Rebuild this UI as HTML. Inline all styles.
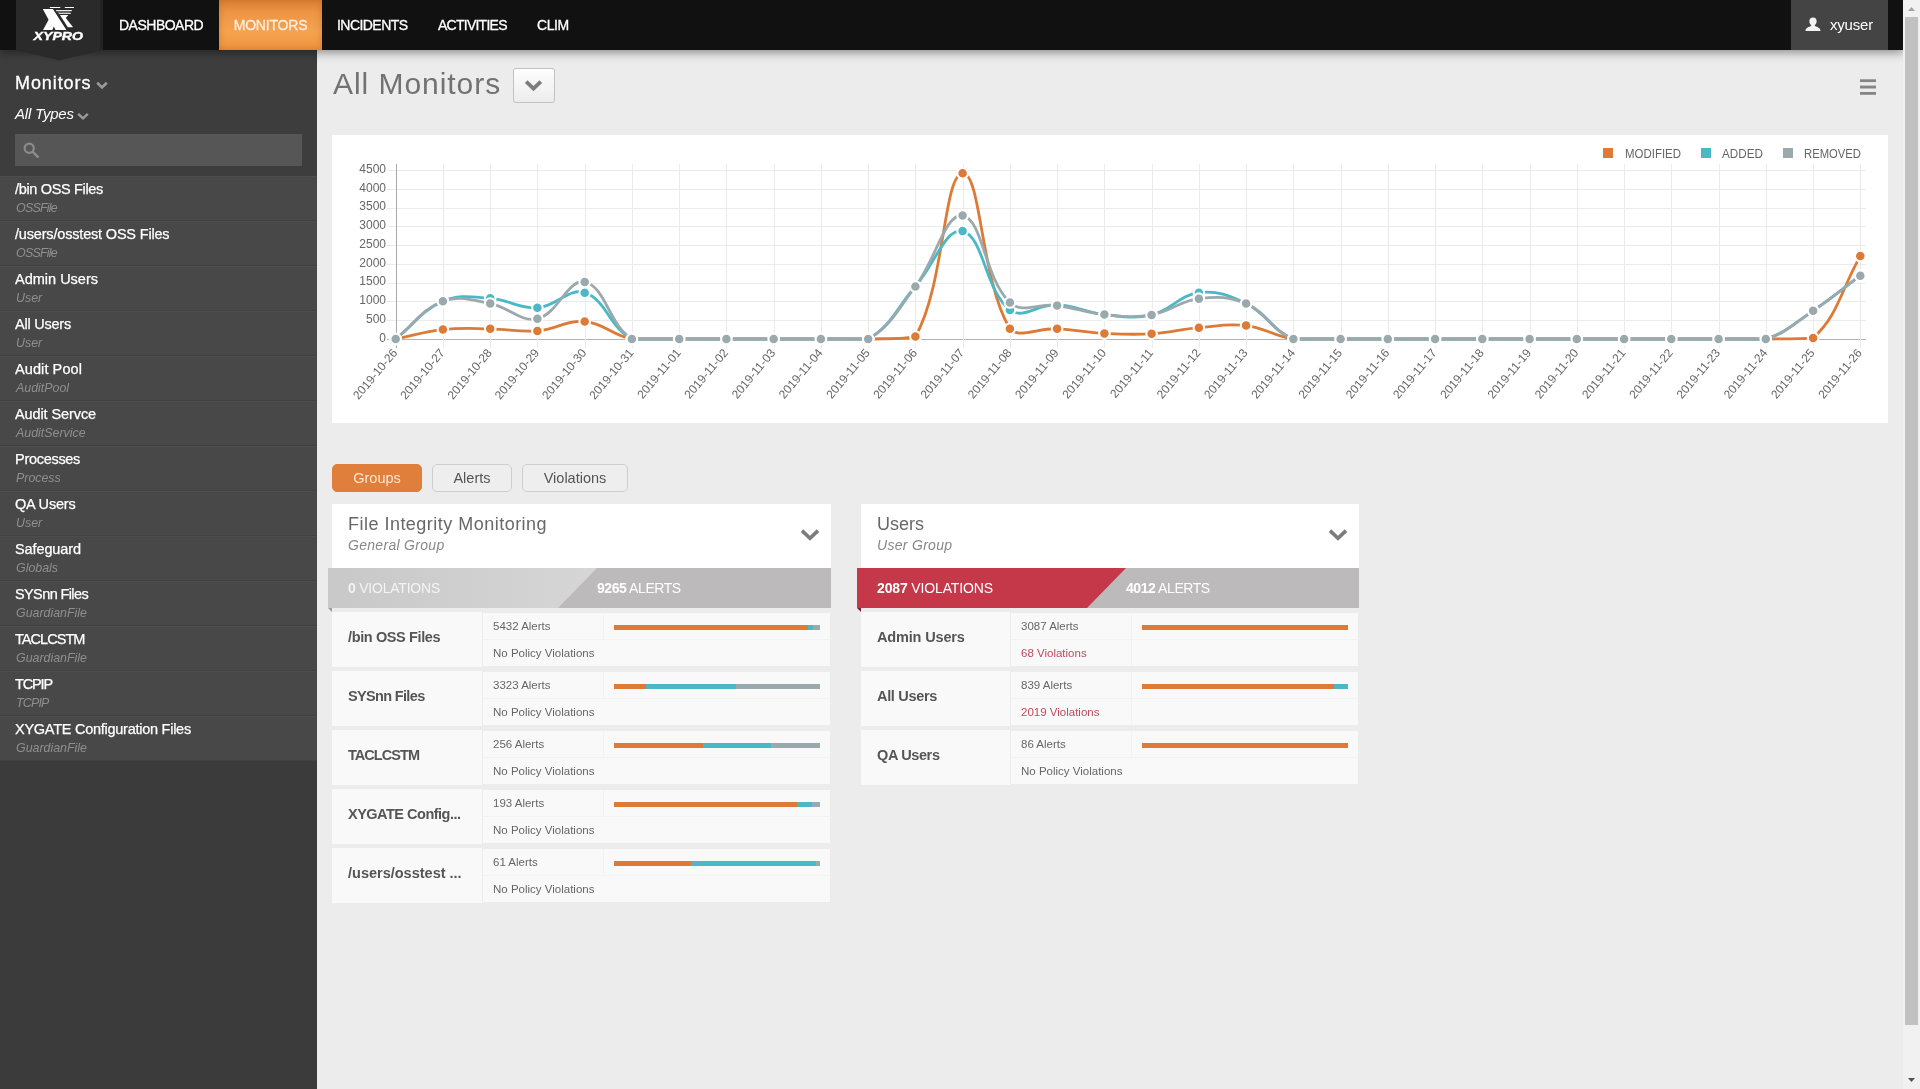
<!DOCTYPE html>
<html><head><meta charset="utf-8"><title>All Monitors</title>
<style>
*{box-sizing:border-box;margin:0;padding:0}
html,body{width:1920px;height:1089px;overflow:hidden}
body{font-family:"Liberation Sans",sans-serif;background:#ececec;position:relative;color:#555}
.abs{position:absolute}
#nav{position:absolute;left:0;top:0;width:1903px;height:50px;background:#111;box-shadow:0 1px 10px 1px rgba(0,0,0,.45);z-index:5}
#nav .it{-webkit-text-stroke:.3px #fff;position:absolute;top:0;height:50px;line-height:50px;color:#fff;font-size:14px;white-space:nowrap;letter-spacing:-0.2px}
#nav .act{-webkit-text-stroke:.3px #fdf0e2;background:linear-gradient(#db8237 0%,#ee9646 28%,#f6a350 62%,#ef9440 100%);box-shadow:inset 0 0 7px rgba(190,95,25,.55);text-align:center;color:#fdf0e2}
#logo{position:absolute;left:16px;top:0;width:87px;height:61px;z-index:6}
#user{position:absolute;left:1791px;top:0;width:97px;height:50px;background:#444}
#side{position:absolute;left:0;top:50px;width:317px;height:1039px;background:#3b3b3b}
#sidehead{position:absolute;left:0;top:0;width:317px;height:126px;background:#3e3d3d}
#side .li{position:absolute;left:0;width:317px;height:45px;background:#484848;border-bottom:1px solid #414141;border-top:1px solid #4d4d4d}
#side .li b{-webkit-text-stroke:.25px #fff;position:absolute;left:15px;top:3px;font-weight:normal;color:#fff;font-size:14.5px;line-height:18px;white-space:nowrap;letter-spacing:-0.15px}
#side .li i{position:absolute;left:16px;top:24px;color:#8f8f8f;font-size:12.4px;line-height:14px;white-space:nowrap}
#main{position:absolute;left:317px;top:50px;width:1586px;height:1039px;background:#ececec}
#sb{position:absolute;left:1903px;top:0;width:17px;height:1089px;background:#f1f1f1;z-index:9}
#sb .th{position:absolute;left:2px;top:17px;width:13px;height:1008px;background:#c1c1c1}
#all{position:absolute;left:0;top:0;width:1920px;height:1089px}
#nav,#side,#logo,.title,.tab,.card,#chart,.hd,.bn,.row,.c,.nm{filter:opacity(1)}
</style></head><body><div id="all">
<div id="nav">
 <div class="it" style="left:119px;letter-spacing:-0.5px">DASHBOARD</div>
 <div class="it act" style="left:219px;width:103px">MONITORS</div>
 <div class="it" style="left:337px;letter-spacing:-0.55px">INCIDENTS</div>
 <div class="it" style="left:438px;letter-spacing:-0.75px">ACTIVITIES</div>
 <div class="it" style="left:537px;letter-spacing:-0.4px">CLIM</div>
 <div id="user">
  <svg class="abs" style="left:14px;top:16.5px" width="16" height="14.5" viewBox="0 0 14 14" preserveAspectRatio="none"><path d="M7 0.5C4.9 0.5 3.8 2.1 3.8 4.2c0 1.4.6 2.9 1.6 3.7v.9C3.6 9.6.6 10.4.4 13.5h13.2c-.2-3.1-3.2-3.9-5-4.7v-.9c1-.8 1.6-2.3 1.6-3.7C10.2 2.1 9.1.5 7 .5z" fill="#f2f2f2"/></svg>
  <span class="abs" style="left:39px;top:0;line-height:50px;color:#fff;font-size:15px;letter-spacing:-0.2px">xyuser</span>
 </div>
</div>
<svg id="logo" viewBox="0 0 87 61">
 <polygon points="0,0 87,0 87,50 43.5,60.5 0,50" fill="#2a2a2a"/>
 <rect x="84" y="0" width="3" height="50" fill="#232323"/>
 <g fill="#fff">
  <polygon points="26.8,9.1 36.9,9.1 50.4,29.9 39.5,29.9 37.9,26.6 36.3,29.9 27,29.9 32.6,19.8"/>
  <polygon points="43.9,14.9 52.2,14.9 49.8,18 57.1,27.2 51.8,27.2"/>
  <rect x="33.8" y="7" width="10.5" height="1"/><rect x="48.8" y="7" width="9.2" height="1"/>
  <rect x="40.1" y="10.1" width="15.7" height="1.1"/>
  <rect x="41.9" y="11.8" width="12.5" height="0.7" fill="#aaa"/>
  <rect x="42.7" y="13.1" width="12.1" height="0.9" fill="#e8e8e8"/>
 </g>
 <text x="17.5" y="39.8" fill="#fff" font-family="Liberation Sans" font-weight="bold" font-style="italic" font-size="10.5" stroke="#fff" stroke-width="0.35" textLength="49.6" lengthAdjust="spacingAndGlyphs">XYPRO</text>
</svg>
<div id="side">
 <div id="sidehead">
  <div class="abs" style="left:15px;top:20.5px;color:#fff;-webkit-text-stroke:.3px #fff;font-size:18px;line-height:24px;letter-spacing:0.92px">Monitors</div>
  <svg class="abs" style="left:96px;top:31px" width="12" height="9" viewBox="0 0 12 9"><path d="M1.2 1.8L6 6.4l4.8-4.6" fill="none" stroke="#9a9a9a" stroke-width="2.6"/></svg>
  <div class="abs" style="left:15px;top:54px;color:#fff;font-size:15px;line-height:20px;font-style:italic;letter-spacing:-0.2px">All Types</div>
  <svg class="abs" style="left:77px;top:62px" width="12" height="9" viewBox="0 0 12 9"><path d="M1.2 1.8L6 6.4l4.8-4.6" fill="none" stroke="#9a9a9a" stroke-width="2.4"/></svg>
  <div class="abs" style="left:15px;top:84px;width:287px;height:32px;background:#575656"></div>
  <svg class="abs" style="left:22px;top:91px" width="18" height="18" viewBox="0 0 18 18"><circle cx="7.2" cy="7.2" r="4.6" fill="none" stroke="#8b8b8b" stroke-width="2.2"/><path d="M10.8 10.8l5 5" stroke="#8b8b8b" stroke-width="2.6" stroke-linecap="round"/></svg>
 </div>
 <div class="li" style="top:126px"><b style="letter-spacing:-0.34px">/bin OSS Files</b><i style="letter-spacing:-0.75px">OSSFile</i></div>
 <div class="li" style="top:171px"><b style="letter-spacing:-0.18px">/users/osstest OSS Files</b><i style="letter-spacing:-0.75px">OSSFile</i></div>
 <div class="li" style="top:216px"><b style="letter-spacing:0.00px">Admin Users</b><i>User</i></div>
 <div class="li" style="top:261px"><b style="letter-spacing:-0.23px">All Users</b><i>User</i></div>
 <div class="li" style="top:306px"><b style="letter-spacing:0.09px">Audit Pool</b><i>AuditPool</i></div>
 <div class="li" style="top:351px"><b style="letter-spacing:-0.10px">Audit Servce</b><i>AuditService</i></div>
 <div class="li" style="top:396px"><b style="letter-spacing:-0.29px">Processes</b><i>Process</i></div>
 <div class="li" style="top:441px"><b style="letter-spacing:-0.19px">QA Users</b><i>User</i></div>
 <div class="li" style="top:486px"><b style="letter-spacing:-0.11px">Safeguard</b><i>Globals</i></div>
 <div class="li" style="top:531px"><b style="letter-spacing:-0.61px">SYSnn Files</b><i>GuardianFile</i></div>
 <div class="li" style="top:576px"><b style="letter-spacing:-0.95px">TACLCSTM</b><i>GuardianFile</i></div>
 <div class="li" style="top:621px"><b style="letter-spacing:-1.15px">TCPIP</b><i style="letter-spacing:-0.8px">TCPIP</i></div>
 <div class="li" style="top:666px"><b style="letter-spacing:-0.26px">XYGATE Configuration Files</b><i>GuardianFile</i></div>
</div>
<svg id="chart" class="abs" style="left:332px;top:135px" width="1556" height="288" viewBox="332 135 1556 288" font-family="Liberation Sans" font-size="12">
<rect x="332" y="135" width="1556" height="288" fill="#fff"/>
<g fill="none" stroke-width="1" shape-rendering="crispEdges"><path d="M387 339.5H1866" stroke="#b4b4b4"/><path d="M387 320.5H1866" stroke="#ebebeb"/><path d="M387 301.5H1866" stroke="#ebebeb"/><path d="M387 283.5H1866" stroke="#ebebeb"/><path d="M387 264.5H1866" stroke="#ebebeb"/><path d="M387 245.5H1866" stroke="#ebebeb"/><path d="M387 226.5H1866" stroke="#ebebeb"/><path d="M387 208.5H1866" stroke="#ebebeb"/><path d="M387 189.5H1866" stroke="#ebebeb"/><path d="M387 170.5H1866" stroke="#ebebeb"/><path d="M396.5 164V348" stroke="#a9a9a9"/><path d="M443.5 164V348" stroke="#ebebeb"/><path d="M490.5 164V348" stroke="#ebebeb"/><path d="M537.5 164V348" stroke="#ebebeb"/><path d="M585.5 164V348" stroke="#ebebeb"/><path d="M632.5 164V348" stroke="#ebebeb"/><path d="M679.5 164V348" stroke="#ebebeb"/><path d="M726.5 164V348" stroke="#ebebeb"/><path d="M774.5 164V348" stroke="#ebebeb"/><path d="M821.5 164V348" stroke="#ebebeb"/><path d="M868.5 164V348" stroke="#ebebeb"/><path d="M915.5 164V348" stroke="#ebebeb"/><path d="M963.5 164V348" stroke="#ebebeb"/><path d="M1010.5 164V348" stroke="#ebebeb"/><path d="M1057.5 164V348" stroke="#ebebeb"/><path d="M1104.5 164V348" stroke="#ebebeb"/><path d="M1152.5 164V348" stroke="#ebebeb"/><path d="M1199.5 164V348" stroke="#ebebeb"/><path d="M1246.5 164V348" stroke="#ebebeb"/><path d="M1293.5 164V348" stroke="#ebebeb"/><path d="M1341.5 164V348" stroke="#ebebeb"/><path d="M1388.5 164V348" stroke="#ebebeb"/><path d="M1435.5 164V348" stroke="#ebebeb"/><path d="M1482.5 164V348" stroke="#ebebeb"/><path d="M1530.5 164V348" stroke="#ebebeb"/><path d="M1577.5 164V348" stroke="#ebebeb"/><path d="M1624.5 164V348" stroke="#ebebeb"/><path d="M1671.5 164V348" stroke="#ebebeb"/><path d="M1719.5 164V348" stroke="#ebebeb"/><path d="M1766.5 164V348" stroke="#ebebeb"/><path d="M1813.5 164V348" stroke="#ebebeb"/><path d="M1860.5 164V348" stroke="#ebebeb"/></g>
<g fill="#666" text-anchor="end"><text x="386" y="341.5">0</text><text x="386" y="322.7">500</text><text x="386" y="304.0">1000</text><text x="386" y="285.2">1500</text><text x="386" y="266.5">2000</text><text x="386" y="247.7">2500</text><text x="386" y="229.0">3000</text><text x="386" y="210.2">3500</text><text x="386" y="191.5">4000</text><text x="386" y="172.7">4500</text></g>
<g fill="#666" text-anchor="end"><text transform="translate(394.8 350.4) rotate(-50)" y="4.2">2019-10-26</text><text transform="translate(442.0 350.4) rotate(-50)" y="4.2">2019-10-27</text><text transform="translate(489.3 350.4) rotate(-50)" y="4.2">2019-10-28</text><text transform="translate(536.5 350.4) rotate(-50)" y="4.2">2019-10-29</text><text transform="translate(583.8 350.4) rotate(-50)" y="4.2">2019-10-30</text><text transform="translate(631.0 350.4) rotate(-50)" y="4.2">2019-10-31</text><text transform="translate(678.3 350.4) rotate(-50)" y="4.2">2019-11-01</text><text transform="translate(725.5 350.4) rotate(-50)" y="4.2">2019-11-02</text><text transform="translate(772.8 350.4) rotate(-50)" y="4.2">2019-11-03</text><text transform="translate(820.0 350.4) rotate(-50)" y="4.2">2019-11-04</text><text transform="translate(867.3 350.4) rotate(-50)" y="4.2">2019-11-05</text><text transform="translate(914.5 350.4) rotate(-50)" y="4.2">2019-11-06</text><text transform="translate(961.7 350.4) rotate(-50)" y="4.2">2019-11-07</text><text transform="translate(1009.0 350.4) rotate(-50)" y="4.2">2019-11-08</text><text transform="translate(1056.2 350.4) rotate(-50)" y="4.2">2019-11-09</text><text transform="translate(1103.5 350.4) rotate(-50)" y="4.2">2019-11-10</text><text transform="translate(1150.7 350.4) rotate(-50)" y="4.2">2019-11-11</text><text transform="translate(1198.0 350.4) rotate(-50)" y="4.2">2019-11-12</text><text transform="translate(1245.2 350.4) rotate(-50)" y="4.2">2019-11-13</text><text transform="translate(1292.5 350.4) rotate(-50)" y="4.2">2019-11-14</text><text transform="translate(1339.7 350.4) rotate(-50)" y="4.2">2019-11-15</text><text transform="translate(1386.9 350.4) rotate(-50)" y="4.2">2019-11-16</text><text transform="translate(1434.2 350.4) rotate(-50)" y="4.2">2019-11-17</text><text transform="translate(1481.4 350.4) rotate(-50)" y="4.2">2019-11-18</text><text transform="translate(1528.7 350.4) rotate(-50)" y="4.2">2019-11-19</text><text transform="translate(1575.9 350.4) rotate(-50)" y="4.2">2019-11-20</text><text transform="translate(1623.2 350.4) rotate(-50)" y="4.2">2019-11-21</text><text transform="translate(1670.4 350.4) rotate(-50)" y="4.2">2019-11-22</text><text transform="translate(1717.7 350.4) rotate(-50)" y="4.2">2019-11-23</text><text transform="translate(1764.9 350.4) rotate(-50)" y="4.2">2019-11-24</text><text transform="translate(1812.2 350.4) rotate(-50)" y="4.2">2019-11-25</text><text transform="translate(1859.4 350.4) rotate(-50)" y="4.2">2019-11-26</text></g>
<path d="M395.7 339.0C414.6 335.2 423.9 331.6 442.9 329.6C461.7 327.6 471.3 328.6 490.2 328.8C509.1 329.1 518.7 332.4 537.4 330.9C556.5 329.4 566.2 319.9 584.7 321.5C604.0 323.1 612.4 335.4 631.9 339.0C650.2 339.0 660.3 339.0 679.2 339.0C698.1 339.0 707.5 339.0 726.4 339.0C745.3 339.0 754.8 339.0 773.7 339.0C792.6 339.0 802.0 339.0 820.9 339.0C839.8 339.0 849.3 339.0 868.2 339.0C887.1 338.5 907.2 339.0 915.4 336.6C945.0 284.7 943.3 174.8 962.6 173.3C981.1 171.8 980.6 280.6 1009.9 328.8C1018.4 339.0 1038.3 327.9 1057.1 328.8C1076.1 329.7 1085.4 332.4 1104.4 333.4C1123.2 334.3 1132.8 334.9 1151.6 333.8C1170.6 332.7 1179.9 329.3 1198.9 327.7C1217.7 326.1 1227.6 323.4 1246.1 325.6C1265.4 327.9 1274.1 336.3 1293.4 339.0C1311.9 339.0 1321.7 339.0 1340.6 339.0C1359.5 339.0 1369.0 339.0 1387.8 339.0C1406.7 339.0 1416.2 339.0 1435.1 339.0C1454.0 339.0 1463.4 339.0 1482.3 339.0C1501.2 339.0 1510.7 339.0 1529.6 339.0C1548.5 339.0 1557.9 339.0 1576.8 339.0C1595.7 339.0 1605.2 339.0 1624.1 339.0C1643.0 339.0 1652.4 339.0 1671.3 339.0C1690.2 339.0 1699.7 339.0 1718.6 339.0C1737.5 339.0 1746.9 339.0 1765.8 339.0C1784.7 338.8 1800.4 339.0 1813.1 337.9C1838.2 315.8 1841.4 288.8 1860.3 256.1" fill="none" stroke="#dc7a36" stroke-width="2.8"/>
<g fill="#dc7a36" stroke="#fff" stroke-width="2.1"><circle cx="395.7" cy="339.0" r="5.3"/><circle cx="442.9" cy="329.6" r="5.3"/><circle cx="490.2" cy="328.8" r="5.3"/><circle cx="537.4" cy="330.9" r="5.3"/><circle cx="584.7" cy="321.5" r="5.3"/><circle cx="631.9" cy="339.0" r="5.3"/><circle cx="679.2" cy="339.0" r="5.3"/><circle cx="726.4" cy="339.0" r="5.3"/><circle cx="773.7" cy="339.0" r="5.3"/><circle cx="820.9" cy="339.0" r="5.3"/><circle cx="868.2" cy="339.0" r="5.3"/><circle cx="915.4" cy="336.6" r="5.3"/><circle cx="962.6" cy="173.3" r="5.3"/><circle cx="1009.9" cy="328.8" r="5.3"/><circle cx="1057.1" cy="328.8" r="5.3"/><circle cx="1104.4" cy="333.4" r="5.3"/><circle cx="1151.6" cy="333.8" r="5.3"/><circle cx="1198.9" cy="327.7" r="5.3"/><circle cx="1246.1" cy="325.6" r="5.3"/><circle cx="1293.4" cy="339.0" r="5.3"/><circle cx="1340.6" cy="339.0" r="5.3"/><circle cx="1387.8" cy="339.0" r="5.3"/><circle cx="1435.1" cy="339.0" r="5.3"/><circle cx="1482.3" cy="339.0" r="5.3"/><circle cx="1529.6" cy="339.0" r="5.3"/><circle cx="1576.8" cy="339.0" r="5.3"/><circle cx="1624.1" cy="339.0" r="5.3"/><circle cx="1671.3" cy="339.0" r="5.3"/><circle cx="1718.6" cy="339.0" r="5.3"/><circle cx="1765.8" cy="339.0" r="5.3"/><circle cx="1813.1" cy="337.9" r="5.3"/><circle cx="1860.3" cy="256.1" r="5.3"/></g>
<path d="M395.7 339.0C414.6 323.9 421.8 310.5 442.9 301.3C459.5 294.2 471.5 297.0 490.2 298.3C509.3 299.6 518.8 308.9 537.4 307.8C556.6 306.7 568.5 287.3 584.7 292.7C606.3 299.8 609.9 328.2 631.9 339.0C647.7 339.0 660.3 339.0 679.2 339.0C698.1 339.0 707.5 339.0 726.4 339.0C745.3 339.0 754.8 339.0 773.7 339.0C792.6 339.0 802.0 339.0 820.9 339.0C839.8 339.0 853.0 339.0 868.2 339.0C890.8 326.4 896.8 307.7 915.4 286.5C934.6 264.6 945.9 226.9 962.6 231.1C983.7 236.3 985.0 290.6 1009.9 310.0C1022.8 320.0 1038.4 303.8 1057.1 304.7C1076.2 305.6 1085.3 312.5 1104.4 314.5C1123.1 316.5 1133.7 319.0 1151.6 314.9C1171.5 310.3 1179.3 295.0 1198.9 292.7C1217.1 290.5 1229.1 295.2 1246.1 303.6C1266.9 313.8 1272.4 331.1 1293.4 339.0C1310.2 339.0 1321.7 339.0 1340.6 339.0C1359.5 339.0 1369.0 339.0 1387.8 339.0C1406.7 339.0 1416.2 339.0 1435.1 339.0C1454.0 339.0 1463.4 339.0 1482.3 339.0C1501.2 339.0 1510.7 339.0 1529.6 339.0C1548.5 339.0 1557.9 339.0 1576.8 339.0C1595.7 339.0 1605.2 339.0 1624.1 339.0C1643.0 339.0 1652.4 339.0 1671.3 339.0C1690.2 339.0 1699.7 339.0 1718.6 339.0C1737.5 339.0 1748.4 339.0 1765.8 339.0C1786.1 332.9 1794.8 323.0 1813.1 310.8C1832.6 297.7 1841.4 289.7 1860.3 275.7" fill="none" stroke="#4bb8c6" stroke-width="2.8"/>
<g fill="#4bb8c6" stroke="#fff" stroke-width="2.1"><circle cx="395.7" cy="339.0" r="5.3"/><circle cx="442.9" cy="301.3" r="5.3"/><circle cx="490.2" cy="298.3" r="5.3"/><circle cx="537.4" cy="307.8" r="5.3"/><circle cx="584.7" cy="292.7" r="5.3"/><circle cx="631.9" cy="339.0" r="5.3"/><circle cx="679.2" cy="339.0" r="5.3"/><circle cx="726.4" cy="339.0" r="5.3"/><circle cx="773.7" cy="339.0" r="5.3"/><circle cx="820.9" cy="339.0" r="5.3"/><circle cx="868.2" cy="339.0" r="5.3"/><circle cx="915.4" cy="286.5" r="5.3"/><circle cx="962.6" cy="231.1" r="5.3"/><circle cx="1009.9" cy="310.0" r="5.3"/><circle cx="1057.1" cy="304.7" r="5.3"/><circle cx="1104.4" cy="314.5" r="5.3"/><circle cx="1151.6" cy="314.9" r="5.3"/><circle cx="1198.9" cy="292.7" r="5.3"/><circle cx="1246.1" cy="303.6" r="5.3"/><circle cx="1293.4" cy="339.0" r="5.3"/><circle cx="1340.6" cy="339.0" r="5.3"/><circle cx="1387.8" cy="339.0" r="5.3"/><circle cx="1435.1" cy="339.0" r="5.3"/><circle cx="1482.3" cy="339.0" r="5.3"/><circle cx="1529.6" cy="339.0" r="5.3"/><circle cx="1576.8" cy="339.0" r="5.3"/><circle cx="1624.1" cy="339.0" r="5.3"/><circle cx="1671.3" cy="339.0" r="5.3"/><circle cx="1718.6" cy="339.0" r="5.3"/><circle cx="1765.8" cy="339.0" r="5.3"/><circle cx="1813.1" cy="310.8" r="5.3"/><circle cx="1860.3" cy="275.7" r="5.3"/></g>
<path d="M395.7 339.0C414.6 323.9 421.7 309.3 442.9 301.3C459.5 295.1 471.7 300.2 490.2 303.6C509.5 307.1 520.3 322.6 537.4 318.7C558.1 313.9 567.8 278.4 584.7 282.0C605.6 286.5 608.9 325.1 631.9 339.0C646.7 339.0 660.3 339.0 679.2 339.0C698.1 339.0 707.5 339.0 726.4 339.0C745.3 339.0 754.8 339.0 773.7 339.0C792.6 339.0 802.0 339.0 820.9 339.0C839.8 339.0 853.0 339.0 868.2 339.0C890.8 326.4 898.3 308.8 915.4 286.5C936.0 259.5 945.2 212.7 962.6 215.6C982.9 219.1 984.3 278.2 1009.9 302.5C1022.1 314.1 1038.4 303.1 1057.1 305.5C1076.2 307.9 1085.3 312.6 1104.4 314.5C1123.1 316.4 1133.2 318.0 1151.6 314.9C1171.0 311.6 1179.5 301.0 1198.9 298.7C1217.3 296.5 1229.3 296.4 1246.1 303.6C1267.1 312.5 1272.4 331.1 1293.4 339.0C1310.2 339.0 1321.7 339.0 1340.6 339.0C1359.5 339.0 1369.0 339.0 1387.8 339.0C1406.7 339.0 1416.2 339.0 1435.1 339.0C1454.0 339.0 1463.4 339.0 1482.3 339.0C1501.2 339.0 1510.7 339.0 1529.6 339.0C1548.5 339.0 1557.9 339.0 1576.8 339.0C1595.7 339.0 1605.2 339.0 1624.1 339.0C1643.0 339.0 1652.4 339.0 1671.3 339.0C1690.2 339.0 1699.7 339.0 1718.6 339.0C1737.5 339.0 1748.4 339.0 1765.8 339.0C1786.1 332.9 1794.8 323.0 1813.1 310.8C1832.6 297.7 1841.4 289.7 1860.3 275.7" fill="none" stroke="#9aa9ad" stroke-width="2.8"/>
<g fill="#9aa9ad" stroke="#fff" stroke-width="2.1"><circle cx="395.7" cy="339.0" r="5.3"/><circle cx="442.9" cy="301.3" r="5.3"/><circle cx="490.2" cy="303.6" r="5.3"/><circle cx="537.4" cy="318.7" r="5.3"/><circle cx="584.7" cy="282.0" r="5.3"/><circle cx="631.9" cy="339.0" r="5.3"/><circle cx="679.2" cy="339.0" r="5.3"/><circle cx="726.4" cy="339.0" r="5.3"/><circle cx="773.7" cy="339.0" r="5.3"/><circle cx="820.9" cy="339.0" r="5.3"/><circle cx="868.2" cy="339.0" r="5.3"/><circle cx="915.4" cy="286.5" r="5.3"/><circle cx="962.6" cy="215.6" r="5.3"/><circle cx="1009.9" cy="302.5" r="5.3"/><circle cx="1057.1" cy="305.5" r="5.3"/><circle cx="1104.4" cy="314.5" r="5.3"/><circle cx="1151.6" cy="314.9" r="5.3"/><circle cx="1198.9" cy="298.7" r="5.3"/><circle cx="1246.1" cy="303.6" r="5.3"/><circle cx="1293.4" cy="339.0" r="5.3"/><circle cx="1340.6" cy="339.0" r="5.3"/><circle cx="1387.8" cy="339.0" r="5.3"/><circle cx="1435.1" cy="339.0" r="5.3"/><circle cx="1482.3" cy="339.0" r="5.3"/><circle cx="1529.6" cy="339.0" r="5.3"/><circle cx="1576.8" cy="339.0" r="5.3"/><circle cx="1624.1" cy="339.0" r="5.3"/><circle cx="1671.3" cy="339.0" r="5.3"/><circle cx="1718.6" cy="339.0" r="5.3"/><circle cx="1765.8" cy="339.0" r="5.3"/><circle cx="1813.1" cy="310.8" r="5.3"/><circle cx="1860.3" cy="275.7" r="5.3"/></g>
<g font-size="12" fill="#666"><rect x="1603" y="148" width="10" height="10" fill="#dc7a36"/><text x="1625" y="157.5" textLength="56" lengthAdjust="spacingAndGlyphs">MODIFIED</text><rect x="1701" y="148" width="10" height="10" fill="#4bb8c6"/><text x="1722" y="157.5" textLength="41" lengthAdjust="spacingAndGlyphs">ADDED</text><rect x="1783" y="148" width="10" height="10" fill="#9aa9ad"/><text x="1804" y="157.5" textLength="57" lengthAdjust="spacingAndGlyphs">REMOVED</text></g>
</svg>
<style>
.title{position:absolute;left:333px;top:66px;font-size:30px;line-height:36px;color:#727272;white-space:nowrap;letter-spacing:0.95px}
.ddb{position:absolute;left:513px;top:68px;width:42px;height:35px;border:1px solid #c2c2c2;border-radius:3px;background:linear-gradient(#fefefe,#ececec)}
.tab{position:absolute;top:464px;height:28px;line-height:26px;border:1px solid #cdcdcd;border-radius:5px;text-align:center;font-size:14.5px;color:#555;background:#eeeeee}
.tab.on{background:#e07e3b;border-color:#e07e3b;color:#fde6d2}
.card{position:absolute;top:504px;width:498px}
.card .hd{position:absolute;left:0;top:0;width:498px;height:64px;background:#fff}
.card .hd b{position:absolute;left:16px;top:8px;font-weight:normal;font-size:18px;line-height:24px;color:#686868;white-space:nowrap;letter-spacing:0.48px}
.card .hd i{position:absolute;left:16px;top:32px;font-size:14px;line-height:18px;color:#888;white-space:nowrap;letter-spacing:0.3px}
.bn{position:absolute;left:-4px;top:64px;width:502px;height:40px}
.bn span{position:absolute;top:0;line-height:40px;font-size:14px;color:#fff;white-space:nowrap}
.row{position:absolute;left:0;width:498px;height:55px}
.row .nm{position:absolute;left:0;top:0;width:150px;height:55px;background:#f9f9f9;font-weight:bold;font-size:14.5px;line-height:51px;padding-left:16px;color:#555;white-space:nowrap}
.row .c{position:absolute;background:#f9f9f9;font-size:11.5px;color:#666;line-height:26px;padding-left:10px;white-space:nowrap}
.row .bk{position:absolute;top:1px;right:0;height:53px;background:#f2f2f2}
.row .c1{left:151px;top:1px;width:120px;height:26px}
.row .c2{left:272px;top:1px;width:226px;height:26px}
.row .c3{left:151px;top:28px;width:347px;height:26px}
.row .c4{left:151px;top:28px;width:120px;height:26px;color:#bd4a5a}
.row .c5{left:272px;top:28px;width:226px;height:26px}
.bar{position:absolute;left:10px;top:12px;width:206px;height:5px;background:#9aa9ad}
.bar u,.bar s{position:absolute;left:0;top:0;height:5px;display:block}
.bar u{background:#4bb8c6}.bar s{background:#dc7a36}
</style>
<div class="title">All Monitors</div>
<div class="ddb"><svg class="abs" style="left:10px;top:10px" width="20" height="13" viewBox="0 0 20 13"><path d="M2.2 2.6l7.3 7 7.3-7" fill="none" stroke="#7d7d7d" stroke-width="3.8"/></svg></div>
<svg class="abs" style="left:1859px;top:78px" width="19" height="18"><g fill="#858585"><rect x="1" y="1.3" width="16" height="2.8"/><rect x="1" y="7.6" width="16" height="2.9"/><rect x="1" y="14" width="16" height="2.8"/></g></svg>
<div class="tab on" style="left:332px;width:90px">Groups</div><div class="tab" style="left:432px;width:80px">Alerts</div><div class="tab" style="left:522px;width:106px">Violations</div>
<div class="card" style="left:332px;width:499px"><div class="hd" style="width:499px"><b>File Integrity Monitoring</b><i>General Group</i><svg class="abs" style="left:468px;top:24px" width="20" height="14" viewBox="0 0 20 14"><path d="M2 2.6l8 7.6 8-7.6" fill="none" stroke="#7c7c7c" stroke-width="3.6"/></svg></div>
<div class="bn" style="width:503px"><svg class="abs" style="left:0;top:0" width="503" height="44" viewBox="0 0 503 44"><defs><linearGradient id="lg" x1="0" x2="1" y1="0" y2="0"><stop offset="0" stop-color="#c8c8c8"/><stop offset="1" stop-color="#d6d6d6"/></linearGradient></defs><rect x="0" y="0" width="503" height="40" fill="#bcbaba"/><polygon points="0,0 269,0 230,40 0,40" fill="url(#lg)"/><polygon points="0,40 4,40 4,44" fill="#9c9c9c"/></svg><span style="left:20px;color:rgba(255,255,255,.78);letter-spacing:-0.22px"><b>0</b> VIOLATIONS</span><span style="left:269px;letter-spacing:-0.43px"><b>9265</b> ALERTS</span></div>
<div class="row" style="top:108px;width:498px"><div class="nm" style="width:150px;letter-spacing:-0.38px">/bin OSS Files</div><div class="bk" style="left:151px"></div><div class="c c1" style="left:151px">5432 Alerts</div><div class="c c2" style="left:272px"><div class="bar"><u style="width:199px"></u><s style="width:194px"></s></div></div><div class="c c3" style="left:151px">No Policy Violations</div></div>
<div class="row" style="top:167px;width:498px"><div class="nm" style="width:150px;letter-spacing:-0.66px">SYSnn Files</div><div class="bk" style="left:151px"></div><div class="c c1" style="left:151px">3323 Alerts</div><div class="c c2" style="left:272px"><div class="bar"><u style="width:122px"></u><s style="width:32px"></s></div></div><div class="c c3" style="left:151px">No Policy Violations</div></div>
<div class="row" style="top:226px;width:498px"><div class="nm" style="width:150px;letter-spacing:-0.95px">TACLCSTM</div><div class="bk" style="left:151px"></div><div class="c c1" style="left:151px">256 Alerts</div><div class="c c2" style="left:272px"><div class="bar"><u style="width:157px"></u><s style="width:89px"></s></div></div><div class="c c3" style="left:151px">No Policy Violations</div></div>
<div class="row" style="top:285px;width:498px"><div class="nm" style="width:150px;letter-spacing:-0.50px">XYGATE Config...</div><div class="bk" style="left:151px"></div><div class="c c1" style="left:151px">193 Alerts</div><div class="c c2" style="left:272px"><div class="bar"><u style="width:198px"></u><s style="width:183px"></s></div></div><div class="c c3" style="left:151px">No Policy Violations</div></div>
<div class="row" style="top:344px;width:498px"><div class="nm" style="width:150px;letter-spacing:0.00px">/users/osstest ...</div><div class="bk" style="left:151px"></div><div class="c c1" style="left:151px">61 Alerts</div><div class="c c2" style="left:272px"><div class="bar"><u style="width:202px"></u><s style="width:77px"></s></div></div><div class="c c3" style="left:151px">No Policy Violations</div></div>
</div>
<div class="card" style="left:861px;width:498px"><div class="hd" style="width:498px"><b style="letter-spacing:0">Users</b><i>User Group</i><svg class="abs" style="left:467px;top:24px" width="20" height="14" viewBox="0 0 20 14"><path d="M2 2.6l8 7.6 8-7.6" fill="none" stroke="#7c7c7c" stroke-width="3.6"/></svg></div>
<div class="bn" style="width:502px"><svg class="abs" style="left:0;top:0" width="502" height="44" viewBox="0 0 502 44"><defs><linearGradient id="lg" x1="0" x2="1" y1="0" y2="0"><stop offset="0" stop-color="#c8c8c8"/><stop offset="1" stop-color="#d6d6d6"/></linearGradient></defs><rect x="0" y="0" width="502" height="40" fill="#bcbaba"/><polygon points="0,0 269,0 230,40 0,40" fill="#c4384a"/><polygon points="0,40 4,40 4,44" fill="#7d2230"/></svg><span style="left:20px;color:#fff;letter-spacing:-0.14px"><b>2087</b> VIOLATIONS</span><span style="left:269px;letter-spacing:-0.43px"><b>4012</b> ALERTS</span></div>
<div class="row" style="top:108px;width:497px"><div class="nm" style="width:149px;letter-spacing:-0.16px">Admin Users</div><div class="bk" style="left:150px"></div><div class="c c1" style="left:150px">3087 Alerts</div><div class="c c2" style="left:271px"><div class="bar"><u style="width:206px"></u><s style="width:206px"></s></div></div><div class="c c4" style="left:150px">68 Violations</div><div class="c c5" style="left:271px"></div></div>
<div class="row" style="top:167px;width:497px"><div class="nm" style="width:149px;letter-spacing:-0.32px">All Users</div><div class="bk" style="left:150px"></div><div class="c c1" style="left:150px">839 Alerts</div><div class="c c2" style="left:271px"><div class="bar"><u style="width:206px"></u><s style="width:192px"></s></div></div><div class="c c4" style="left:150px">2019 Violations</div><div class="c c5" style="left:271px"></div></div>
<div class="row" style="top:226px;width:497px"><div class="nm" style="width:149px;letter-spacing:-0.37px">QA Users</div><div class="bk" style="left:150px"></div><div class="c c1" style="left:150px">86 Alerts</div><div class="c c2" style="left:271px"><div class="bar"><u style="width:206px"></u><s style="width:206px"></s></div></div><div class="c c3" style="left:150px">No Policy Violations</div></div>
</div>
<div id="sb"><div class="th"></div><svg class="abs" style="left:4px;top:6px" width="9" height="6"><path d="M4.5 1L8 5H1z" fill="#a3a3a3"/></svg><svg class="abs" style="left:4px;top:1077px" width="9" height="6"><path d="M4.5 5L8 1H1z" fill="#505050"/></svg></div>
</div></body></html>
